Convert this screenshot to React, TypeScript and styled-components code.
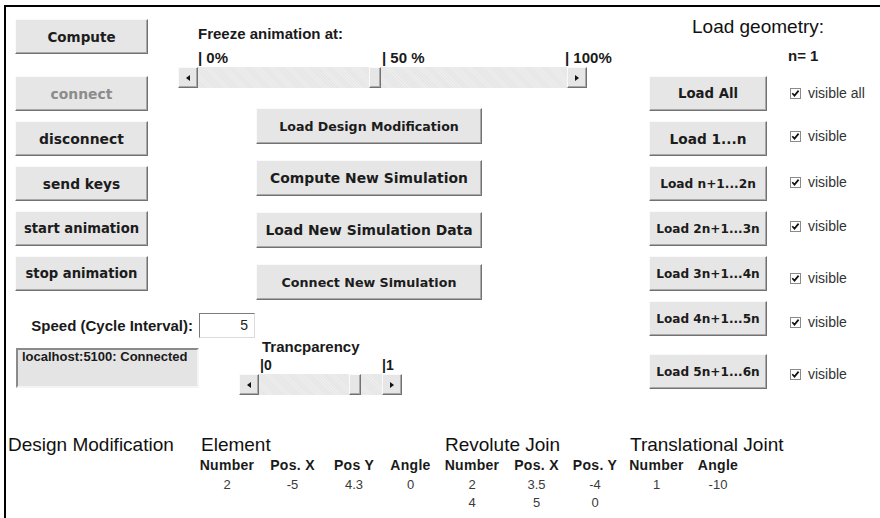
import styled, { createGlobalStyle, css } from 'styled-components'

const GlobalStyle = createGlobalStyle`
  html, body {
    margin: 0;
    padding: 0;
    background: #fff;
  }
  body {
    font-family: 'Liberation Sans', Arial, sans-serif;
    color: #1a1a1a;
  }
`

const raised = css`
  background: #e6e6e6;
  border: 1px solid;
  border-color: #fafafa #727272 #727272 #fafafa;
  box-shadow: inset -1px -1px 0 #a9a9a9;
  box-sizing: border-box;
`

const buttonText = css`
  font-family: 'DejaVu Sans', Verdana, sans-serif;
  font-weight: bold;
  color: #1c1c1c;
  padding: 0;
  white-space: nowrap;
  cursor: pointer;
`

const Frame = styled.div`
  margin: 5px 0 0 4px;
  height: 513px;
  box-sizing: border-box;
  border-top: 2px solid #000;
  border-left: 2px solid #000;
  overflow: hidden;
`

const Top = styled.div`
  display: flex;
  align-items: flex-start;
`

const Main = styled.div`
  display: flex;
  flex-direction: column;
`

const Upper = styled.div`
  display: flex;
  align-items: flex-start;
`

const LeftCol = styled.div`
  display: flex;
  flex-direction: column;
  gap: 10px;
  width: 133px;
  margin: 12px 0 0 9px;
`

const SideButton = styled.button<{ $size: number; $off?: boolean; $spaced?: boolean }>`
  ${raised}
  ${buttonText}
  height: 35px;
  width: 100%;
  font-size: ${(p) => p.$size}px;
  color: ${(p) => (p.$off ? '#8c8c8c' : '#1c1c1c')};
  margin-bottom: ${(p) => (p.$spaced ? 12 : 0)}px;
`

const MidCol = styled.div`
  display: flex;
  flex-direction: column;
  width: 409px;
  margin: 18px 0 0 30px;
`

const Label = styled.div<{ $size?: number }>`
  font-weight: bold;
  font-size: ${(p) => p.$size ?? 15}px;
  line-height: 17px;
  white-space: nowrap;
`

const FreezeLabel = styled(Label)`
  padding-left: 20px;
`

const TickRow = styled.div<{ $indent: number; $size: number; $top: number }>`
  display: flex;
  margin-top: ${(p) => p.$top}px;
  padding-left: ${(p) => p.$indent}px;
  font-weight: bold;
  font-size: ${(p) => p.$size}px;
  line-height: ${(p) => p.$size + 2}px;
  white-space: nowrap;
`

const Tick = styled.span<{ $w?: number }>`
  width: ${(p) => (p.$w ? `${p.$w}px` : 'auto')};
  flex-shrink: 0;
`

const SliderBox = styled.div<{ $w: number }>`
  display: flex;
  width: ${(p) => p.$w}px;
  height: 21px;
  margin-top: 1px;
`

const ArrowButton = styled.div`
  ${raised}
  width: 20px;
  height: 21px;
  flex-shrink: 0;
  display: flex;
  align-items: center;
  justify-content: center;
`

const Tri = styled.span<{ $dir: 'left' | 'right' }>`
  width: 0;
  height: 0;
  border-top: 3px solid transparent;
  border-bottom: 3px solid transparent;
  ${(p) => (p.$dir === 'left' ? 'border-right: 4px solid #111;' : 'border-left: 4px solid #111;')}
`

const Trough = styled.div`
  flex: 1;
  display: flex;
  background-color: #ededed;
  background-image: repeating-linear-gradient(45deg, #e6e6e6 0 1px, transparent 1px 2px);
`

const Thumb = styled.div`
  ${raised}
  width: 12px;
  height: 21px;
  flex-shrink: 0;
`

const ActionList = styled.div`
  display: flex;
  flex-direction: column;
  gap: 16px;
  margin: 20px 0 0 78px;
`

const ActionButton = styled.button<{ $size: number }>`
  ${raised}
  ${buttonText}
  width: 226px;
  height: 36px;
  font-size: ${(p) => p.$size}px;
`

const Lower = styled.div`
  display: flex;
  flex-direction: column;
  margin-top: 13px;
`

const SpeedRow = styled.div`
  display: flex;
  align-items: center;
  gap: 6px;
  padding-left: 10px;
  height: 25px;
`

const SpeedLabel = styled(Label)`
  width: 177px;
  text-align: right;
`

const Field = styled.div`
  width: 56px;
  height: 25px;
  box-sizing: border-box;
  background: #fff;
  border: 1px solid;
  border-color: #7c7c7c #dcdcdc #dcdcdc #7c7c7c;
  font-size: 14px;
  line-height: 23px;
  text-align: right;
  padding-right: 6px;
  color: #222;
`

const StatusRow = styled.div`
  display: flex;
  align-items: flex-start;
`

const StatusBox = styled.div`
  width: 183px;
  height: 40px;
  margin: 10px 0 0 10px;
  box-sizing: border-box;
  background: #e4e4e4;
  border: 2px solid;
  border-color: #8a8a8a #f4f4f4 #f4f4f4 #8a8a8a;
  padding: 0 4px;
  font-weight: bold;
  font-size: 13px;
  line-height: 14px;
  white-space: nowrap;
`

const Transparency = styled.div`
  display: flex;
  flex-direction: column;
  width: 163px;
  margin-left: 40px;
`

const TranspLabel = styled(Label)`
  padding-left: 23px;
`

const RightCol = styled.div`
  display: flex;
  flex-direction: column;
  margin: 9px 0 0 62px;
`

const GeoTitle = styled.div`
  font-size: 19px;
  line-height: 22px;
  padding-left: 43px;
  color: #111;
  white-space: nowrap;
`

const CountLabel = styled(Label)`
  padding-left: 139px;
  margin: 9px 0 12px;
`

const LoadList = styled.div`
  display: flex;
  flex-direction: column;
  gap: 10px;
`

const LoadRow = styled.div<{ $extra?: number }>`
  display: flex;
  align-items: flex-start;
  gap: 23px;
  margin-top: ${(p) => p.$extra ?? 0}px;
`

const LoadButton = styled.button<{ $size: number }>`
  ${raised}
  ${buttonText}
  width: 118px;
  height: 35px;
  flex-shrink: 0;
  font-size: ${(p) => p.$size}px;
`

const CheckLabel = styled.label<{ $drop: number }>`
  display: flex;
  align-items: center;
  gap: 7px;
  margin-top: ${(p) => p.$drop}px;
  font-size: 14px;
  line-height: 12px;
  color: #333;
  white-space: nowrap;
`

const Table = styled.div`
  display: grid;
  grid-template-columns: 179px 52px 51px 44px 41px 54px 47px 42px 53px 42px;
  column-gap: 14px;
  margin-top: 40px;
  padding-left: 2px;
`

const Heading = styled.div<{ $col: number; $span: number }>`
  grid-column: ${(p) => p.$col} / span ${(p) => p.$span};
  font-size: 19px;
  line-height: 20px;
  white-space: nowrap;
  color: #111;
`

const ColHead = styled.div`
  justify-self: center;
  margin-top: 2px;
  font-weight: bold;
  font-size: 14px;
  letter-spacing: 0.3px;
  line-height: 16px;
  white-space: nowrap;
`

const Cell = styled.div<{ $col: number }>`
  grid-column: ${(p) => p.$col};
  justify-self: center;
  font-size: 13px;
  line-height: 18px;
  color: #3a3a3a;
`

const RowGap = styled.div`
  height: 3px;
  grid-column: 1 / -1;
`

function Check() {
  return (
    <svg width="11" height="11" viewBox="0 0 11 11">
      <rect x="0.5" y="0.5" width="10" height="10" fill="#fff" stroke="#8a8a8a" />
      <path d="M2.3 5.2 L4.5 7.6 L8.6 2.6" fill="none" stroke="#111" strokeWidth="1.7" />
    </svg>
  )
}

function Slider({ width, value }: { width: number; value: number }) {
  const free = width - 40 - 12
  return (
    <SliderBox $w={width}>
      <ArrowButton>
        <Tri $dir="left" />
      </ArrowButton>
      <Trough>
        <span style={{ width: Math.round(free * value) }} />
        <Thumb />
      </Trough>
      <ArrowButton>
        <Tri $dir="right" />
      </ArrowButton>
    </SliderBox>
  )
}

const sideButtons = [
  { label: 'Compute', size: 13.5, spaced: true },
  { label: 'connect', size: 13.9, off: true },
  { label: 'disconnect', size: 13.9 },
  { label: 'send keys', size: 13.8 },
  { label: 'start animation', size: 13.2 },
  { label: 'stop animation', size: 13.2 },
]

const actions = [
  { label: 'Load Design Modification', size: 12.6 },
  { label: 'Compute New Simulation', size: 13.9 },
  { label: 'Load New Simulation Data', size: 13.9 },
  { label: 'Connect New Simulation', size: 12.7 },
]

const loads = [
  { label: 'Load All', size: 13.3, check: 'visible all', drop: 11 },
  { label: 'Load 1...n', size: 13.7, check: 'visible', drop: 9 },
  { label: 'Load n+1...2n', size: 12.2, check: 'visible', drop: 10 },
  { label: 'Load 2n+1...3n', size: 12.1, check: 'visible', drop: 9 },
  { label: 'Load 3n+1...4n', size: 12.1, check: 'visible', drop: 16 },
  { label: 'Load 4n+1...5n', size: 12.1, check: 'visible', drop: 15 },
  { label: 'Load 5n+1...6n', size: 12.1, check: 'visible', drop: 14, extra: 8 },
]

const headers = ['Number', 'Pos. X', 'Pos Y', 'Angle', 'Number', 'Pos. X', 'Pos. Y', 'Number', 'Angle']
const rows = [
  ['2', '-5', '4.3', '0', '2', '3.5', '-4', '1', '-10'],
  ['', '', '', '', '4', '5', '0', '', ''],
]

export default function App() {
  return (
    <>
      <GlobalStyle />
      <Frame>
        <Top>
          <Main>
            <Upper>
              <LeftCol>
                {sideButtons.map((b) => (
                  <SideButton key={b.label} $size={b.size} $off={b.off} $spaced={b.spaced}>
                    {b.label}
                  </SideButton>
                ))}
              </LeftCol>
              <MidCol>
                <FreezeLabel>Freeze animation at:</FreezeLabel>
                <TickRow $indent={20} $size={15} $top={7}>
                  <Tick $w={184}>| 0%</Tick>
                  <Tick $w={183}>| 50 %</Tick>
                  <Tick>| 100%</Tick>
                </TickRow>
                <Slider width={409} value={0.48} />
                <ActionList>
                  {actions.map((a) => (
                    <ActionButton key={a.label} $size={a.size}>
                      {a.label}
                    </ActionButton>
                  ))}
                </ActionList>
              </MidCol>
            </Upper>
            <Lower>
              <SpeedRow>
                <SpeedLabel>Speed (Cycle Interval):</SpeedLabel>
                <Field>5</Field>
              </SpeedRow>
              <StatusRow>
                <StatusBox>localhost:5100: Connected</StatusBox>
                <Transparency>
                  <TranspLabel>Trancparency</TranspLabel>
                  <TickRow $indent={21} $size={14} $top={2}>
                    <Tick $w={122}>|0</Tick>
                    <Tick>|1</Tick>
                  </TickRow>
                  <Slider width={163} value={0.81} />
                </Transparency>
              </StatusRow>
            </Lower>
          </Main>
          <RightCol>
            <GeoTitle>Load geometry:</GeoTitle>
            <CountLabel>n= 1</CountLabel>
            <LoadList>
              {loads.map((l) => (
                <LoadRow key={l.label} $extra={l.extra}>
                  <LoadButton $size={l.size}>{l.label}</LoadButton>
                  <CheckLabel $drop={l.drop}>
                    <Check />
                    {l.check}
                  </CheckLabel>
                </LoadRow>
              ))}
            </LoadList>
          </RightCol>
        </Top>
        <Table>
          <Heading $col={1} $span={1}>Design Modification</Heading>
          <Heading $col={2} $span={4}>Element</Heading>
          <Heading $col={6} $span={3}>Revolute Join</Heading>
          <Heading $col={9} $span={2}>Translational Joint</Heading>
          <div />
          {headers.map((h, i) => (
            <ColHead key={i}>{h}</ColHead>
          ))}
          <RowGap />
          {rows.map((r, ri) =>
            r.map((v, ci) => (v ? <Cell key={`${ri}-${ci}`} $col={ci + 2}>{v}</Cell> : null)),
          )}
        </Table>
      </Frame>
    </>
  )
}
